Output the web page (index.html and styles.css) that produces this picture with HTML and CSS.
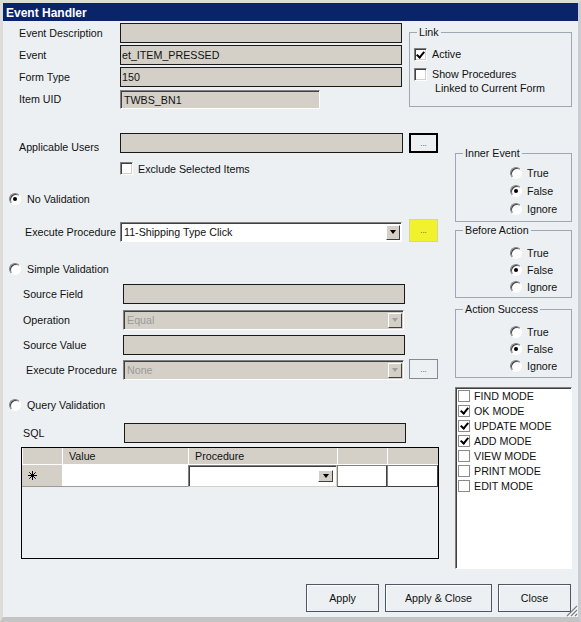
FILE: index.html
```html
<html>
<head>
    <link rel="stylesheet" href="styles.css">
</head>
<body>
<div class="window">
    <div class="titlebar">Event Handler</div>

    <div class="top">
        <div class="fields">
            <span class="lbl">Event Description</span><span class="box"></span>
            <span class="lbl">Event</span><span class="box">et_ITEM_PRESSED</span>
            <span class="lbl">Form Type</span><span class="box">150</span>
            <span class="lbl">Item UID</span><span class="box sunken uid">TWBS_BN1</span>
        </div>
        <fieldset class="group link">
            <legend>Link</legend>
            <div class="check"><span class="cb on"></span>Active</div>
            <div class="check"><span class="cb"></span>Show Procedures</div>
            <div class="sub">Linked to Current Form</div>
        </fieldset>
    </div>

    <div class="middle">
        <div class="left">
            <div class="row r-users">
                <span class="lbl">Applicable Users</span>
                <span class="box w283"></span>
                <button class="dots default">...</button>
            </div>
            <div class="row r-exclude">
                <span class="cb"></span>Exclude Selected Items
            </div>
            <div class="row r-radio r-novalid">
                <span class="rb on"></span>No Validation
            </div>
            <div class="row r-exec">
                <span class="lbl l25">Execute Procedure</span>
                <span class="combo w282"><span>11-Shipping Type Click</span><span class="arrow"></span></span>
                <button class="dots yellow">...</button>
            </div>
            <div class="row r-radio r-simple">
                <span class="rb"></span>Simple Validation
            </div>
            <div class="row r-source">
                <span class="lbl l23">Source Field</span>
                <span class="box w282"></span>
            </div>
            <div class="row r-op">
                <span class="lbl l23">Operation</span>
                <span class="combo off w281"><span>Equal</span><span class="arrow"></span></span>
            </div>
            <div class="row r-value">
                <span class="lbl l23">Source Value</span>
                <span class="box w282"></span>
            </div>
            <div class="row r-exec2">
                <span class="lbl l26">Execute Procedure</span>
                <span class="combo off w281"><span>None</span><span class="arrow"></span></span>
                <button class="dots flat">...</button>
            </div>
            <div class="row r-radio r-query">
                <span class="rb"></span>Query Validation
            </div>
            <div class="row r-sql">
                <span class="lbl l23 w121">SQL</span>
                <span class="box w282"></span>
            </div>
            <div class="grid">
                <span class="gh"></span>
                <span class="gh">Value</span>
                <span class="gh">Procedure</span>
                <span class="gh"></span>
                <span class="gh"></span>
                <span class="gr">
                    <svg width="9" height="9" viewBox="0 0 9 9"><path d="M4.5 0v9M0 4.5h9M1.3 1.3l6.4 6.4M7.7 1.3l-6.4 6.4" stroke="#000" stroke-width="1"/></svg>
                </span>
                <span class="gc"></span>
                <span class="gc gsel"><span class="arrow"></span></span>
                <span class="gc gbox"></span>
                <span class="gc gbox"></span>
            </div>
        </div>

        <div class="right">
            <fieldset class="group opts inner">
                <legend>Inner Event</legend>
                <div class="opt"><span class="rb"></span>True</div>
                <div class="opt"><span class="rb on"></span>False</div>
                <div class="opt"><span class="rb"></span>Ignore</div>
            </fieldset>
            <fieldset class="group opts before">
                <legend>Before Action</legend>
                <div class="opt"><span class="rb"></span>True</div>
                <div class="opt"><span class="rb on"></span>False</div>
                <div class="opt"><span class="rb"></span>Ignore</div>
            </fieldset>
            <fieldset class="group opts success">
                <legend>Action Success</legend>
                <div class="opt"><span class="rb"></span>True</div>
                <div class="opt"><span class="rb on"></span>False</div>
                <div class="opt"><span class="rb"></span>Ignore</div>
            </fieldset>
            <div class="modes">
                <div class="mode"><span class="fb"></span>FIND MODE</div>
                <div class="mode"><span class="fb on"></span>OK MODE</div>
                <div class="mode"><span class="fb on"></span>UPDATE MODE</div>
                <div class="mode"><span class="fb on"></span>ADD MODE</div>
                <div class="mode"><span class="fb"></span>VIEW MODE</div>
                <div class="mode"><span class="fb"></span>PRINT MODE</div>
                <div class="mode"><span class="fb"></span>EDIT MODE</div>
            </div>
        </div>
    </div>

    <div class="footer">
        <button class="btn w73">Apply</button>
        <button class="btn w107">Apply &amp; Close</button>
        <button class="btn w73">Close</button>
    </div>

    <svg class="grip" width="13" height="13" viewBox="0 0 13 13">
        <path d="M12 2L2 12M12 6L6 12M12 10L10 12" stroke="#808080" stroke-width="1.2"/>
        <path d="M13 3L3 13M13 7L7 13M13 11L11 13" stroke="#fff" stroke-width="1"/>
    </svg>
</div>
</body>
</html>
```

FILE: styles.css
```css
body{
    margin:0;
    font-family:"Liberation Sans", Arial, sans-serif;
    font-size:10.7px;
    color:#111;
}
button{
    font:inherit;
    color:#111;
    padding:0;
    cursor:pointer;
}
.window{
    position:relative;
    width:581px;
    height:622px;
    box-sizing:border-box;
    border:3px solid #dedcd6;
    border-right-color:#c9cdd1;
    border-bottom:5px solid #c4c4c4;
    background:#ecf0f3;
}
.titlebar{
    height:18px;
    line-height:20px;
    padding-left:3px;
    background:#0a246a;
    color:#fff;
    font-weight:bold;
    font-size:12px;
}

/* header fields + link box */
.top{
    display:flex;
    align-items:flex-start;
}
.fields{
    display:grid;
    grid-template-columns:117px 282px;
    grid-auto-rows:20px;
    row-gap:2px;
    padding-top:2px;
    align-items:center;
}
.lbl{
    flex:none;
    width:117px;
    padding-left:16px;
    box-sizing:border-box;
    white-space:nowrap;
}
.l23{ width:120px; padding-left:20px; }
.l25{ padding-left:22px; }
.l26{ width:120px; padding-left:23px; }
.w121{ width:121px; }
.box{
    height:20px;
    box-sizing:border-box;
    background:#d4d0c8;
    border:1px solid #1a1a1a;
    padding-left:1px;
    line-height:18px;
    white-space:nowrap;
    overflow:hidden;
}
.sunken{
    border-color:#808080 #fff #fff #808080;
    box-shadow:inset 1px 1px #404040;
    padding-left:3px;
}
.uid{ width:200px; height:19px; }
.w281{ width:281px; }
.w282{ width:282px; }
.w283{ width:283px; }

.group{
    margin:0;
    padding:5px 4px 0;
    border:1px solid #9da8b2;
    min-width:0;
    box-sizing:border-box;
}
.group legend{
    padding:0 2px;
    margin-left:3px;
    line-height:13px;
}
.link{
    width:163px;
    margin:5px 0 0 7px;
    padding-bottom:11px;
}
.check{
    display:flex;
    align-items:center;
    height:20px;
}
.sub{
    padding-left:21px;
    line-height:13px;
    margin-top:-2px;
}

/* check boxes and radio buttons */
.cb{
    position:relative;
    flex:none;
    width:13px;
    height:13px;
    box-sizing:border-box;
    background:#fff;
    border:1px solid;
    border-color:#808080 #fff #fff #808080;
    box-shadow:inset 1px 1px #404040, inset -1px -1px #d4d0c8;
    margin-right:5px;
}
.cb.on::after, .fb.on::after{
    content:"";
    position:absolute;
    left:3px;
    top:1px;
    width:3px;
    height:6px;
    border:solid #000;
    border-width:0 2px 2px 0;
    transform:rotate(40deg);
}
.rb{
    position:relative;
    flex:none;
    width:12px;
    height:12px;
    border-radius:50%;
    box-sizing:border-box;
    background:#fff;
    border:1px solid;
    border-color:#808080 #fff #fff #808080;
    box-shadow:inset 1px 1px #404040;
    margin-right:6px;
}
.rb.on::after{
    content:"";
    position:absolute;
    left:3px;
    top:3px;
    width:4px;
    height:4px;
    border-radius:50%;
    background:#000;
}

/* left column */
.middle{
    display:flex;
}
.left{
    width:452px;
    display:flex;
    flex-direction:column;
}
.row{
    display:flex;
    align-items:center;
    flex:none;
    height:20px;
    white-space:nowrap;
}
.r-users{ margin-top:24px; }
.r-users .lbl{ padding-top:7px; }
.r-exclude{ margin-top:9px; height:13px; padding-left:117px; }
.r-radio{ height:13px; padding-left:6px; }
.r-novalid{ margin-top:17px; }
.r-exec{ margin-top:14px; height:23px; align-items:flex-end; }
.r-exec .lbl{ line-height:20px; }
.r-simple{ margin-top:20px; }
.r-source{ margin-top:9px; }
.r-op{ margin-top:6px; }
.r-value{ margin-top:5px; }
.r-exec2{ margin-top:4px; height:21px; }
.r-exec2 .combo{ align-self:flex-end; }
.r-exec2 .dots{ align-self:flex-start; margin-left:5px; }
.r-query{ margin-top:18px; }
.r-sql{ margin-top:12px; }

.combo{
    display:flex;
    align-items:center;
    justify-content:space-between;
    height:20px;
    box-sizing:border-box;
    background:#fff;
    border:1px solid;
    border-color:#808080 #fff #fff #808080;
    box-shadow:inset 1px 1px #404040;
    padding:0 1px 0 3px;
}
.combo.off{
    background:#d4d0c8;
    color:#9a9a9a;
}
.arrow{
    flex:none;
    display:flex;
    align-items:center;
    justify-content:center;
    width:14px;
    height:15px;
    box-sizing:border-box;
    background:#d4d0c8;
    border:1px solid;
    border-color:#fff #404040 #404040 #fff;
}
.arrow::after{
    content:"";
    border:solid transparent;
    border-width:4px 3.5px 0;
    border-top-color:#000;
}
.off .arrow::after{
    border-top-color:#a0a0a0;
}

.dots{
    flex:none;
    width:29px;
    height:20px;
    margin-left:6px;
    box-sizing:border-box;
    background:#ecf0f3;
    border:1px solid #7f8b97;
    font-size:8px;
    color:#444;
}
.dots.default{
    border:2px solid #000;
}
.dots.yellow{
    height:23px;
    margin-left:7px;
    background:#f2f22c;
    border-color:#d6d69a;
}

/* value/procedure grid */
.grid{
    flex:none;
    margin-top:4px;
    margin-left:18px;
    width:418px;
    height:112px;
    box-sizing:border-box;
    border:1px solid #000;
    display:grid;
    grid-template-columns:40px 126px 149px 50px 1fr;
    grid-template-rows:17px 22px;
    align-content:start;
}
.gh{
    background:#d4d0c8;
    border-left:1px solid #fff;
    border-bottom:1px solid #fff;
    padding-left:6px;
    line-height:16px;
}
.gr{
    display:flex;
    align-items:center;
    padding-left:6px;
    background:#d4d0c8;
    border-bottom:1px solid #9a9a9a;
}
.gc{
    background:#fff;
    border-bottom:1px solid #9a9a9a;
}
.gsel{
    display:flex;
    align-items:center;
    justify-content:flex-end;
    padding-right:3px;
    border:1px solid;
    border-color:#808080 #d4d0c8 #d4d0c8 #808080;
    box-shadow:inset 1px 1px #404040;
}
.gsel .arrow{
    width:15px;
    height:12px;
}
.gbox{
    border:1px solid;
    border-color:#808080 #404040 #404040 #808080;
}

/* right column */
.right{
    width:117px;
    margin-top:38px;
    display:flex;
    flex-direction:column;
}
.opt{
    display:flex;
    align-items:center;
    padding-left:50px;
    height:17px;
}
.opt .rb{ margin-right:5px; }
.inner{ padding-top:4px; padding-bottom:3px; }
.inner .opt{ height:18px; }
.before{ margin-top:2px; padding-top:7px; padding-bottom:2px; }
.success{ margin-top:5px; padding-top:7px; padding-bottom:3px; }

.modes{
    margin-top:9px;
    height:182px;
    box-sizing:border-box;
    background:#fff;
    border:1px solid;
    border-color:#808080 #fff #fff #808080;
    box-shadow:inset 1px 1px #404040;
    padding-left:2px;
}
.mode{
    display:flex;
    align-items:center;
    height:15px;
}
.fb{
    position:relative;
    flex:none;
    width:12px;
    height:12px;
    box-sizing:border-box;
    border:1px solid #8a8a8a;
    background:#fff;
    margin-right:4px;
}
.fb.on::after{
    left:3px;
    top:0;
}

/* bottom buttons */
.footer{
    display:flex;
    justify-content:flex-end;
    gap:6px;
    margin-top:15px;
    padding-right:7px;
}
.btn{
    height:28px;
    box-sizing:border-box;
    border:1px solid #4d5866;
    background:#ecf0f3;
    box-shadow:inset 1px 1px #fff;
}
.w73{ width:73px; }
.w107{ width:107px; }

.grip{
    position:absolute;
    right:0;
    bottom:0;
}
```
